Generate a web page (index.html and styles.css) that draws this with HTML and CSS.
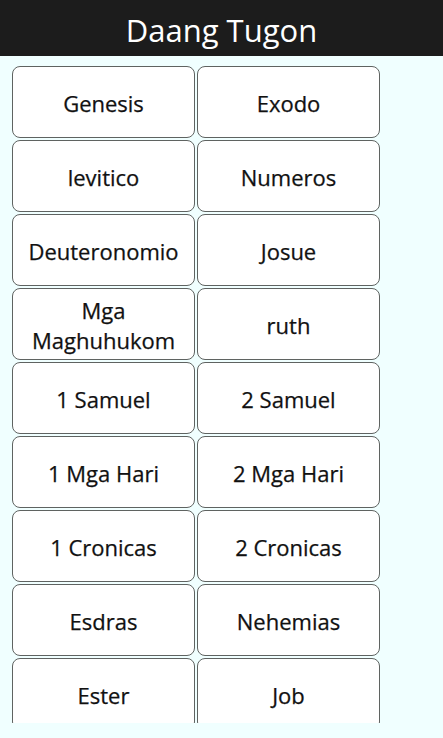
FILE: index.html
```html
<!DOCTYPE html>
<html>
<head>
<meta charset="utf-8">
<link rel="stylesheet" href="styles.css">
</head>
<body>
<header class="top">Daang Tugon</header>
<main class="list">
  <div class="grid">
    <div class="book">Genesis</div>
    <div class="book">Exodo</div>
    <div class="book">levitico</div>
    <div class="book">Numeros</div>
    <div class="book">Deuteronomio</div>
    <div class="book">Josue</div>
    <div class="book">Mga<br>Maghuhukom</div>
    <div class="book">ruth</div>
    <div class="book">1 Samuel</div>
    <div class="book">2 Samuel</div>
    <div class="book">1 Mga Hari</div>
    <div class="book">2 Mga Hari</div>
    <div class="book">1 Cronicas</div>
    <div class="book">2 Cronicas</div>
    <div class="book">Esdras</div>
    <div class="book">Nehemias</div>
    <div class="book">Ester</div>
    <div class="book">Job</div>
  </div>
</main>
</body>
</html>
```
FILE: styles.css
```css
html, body {
  margin: 0;
  padding: 0;
  background: #f0ffff;
  font-family: "Open Sans", "Noto Sans", sans-serif;
}
.top {
  height: 56px;
  background: #1c1c1c;
  color: #ffffff;
  font-size: 31px;
  line-height: 60px;
  text-align: center;
}
.list {
  height: 657px;
  padding-top: 10px;
  overflow: hidden;
}
.grid {
  display: grid;
  grid-template-columns: 183px 183px;
  gap: 2px;
  margin-left: 12px;
}
.book {
  height: 72px;
  box-sizing: border-box;
  padding-top: 2px;
  border: 1.5px solid #5f6361;
  border-radius: 8px;
  background: #ffffff;
  color: #111111;
  font-size: 22px;
  line-height: 30px;
  -webkit-text-stroke: 0.25px #111111;
  display: flex;
  align-items: center;
  justify-content: center;
  text-align: center;
}
```
